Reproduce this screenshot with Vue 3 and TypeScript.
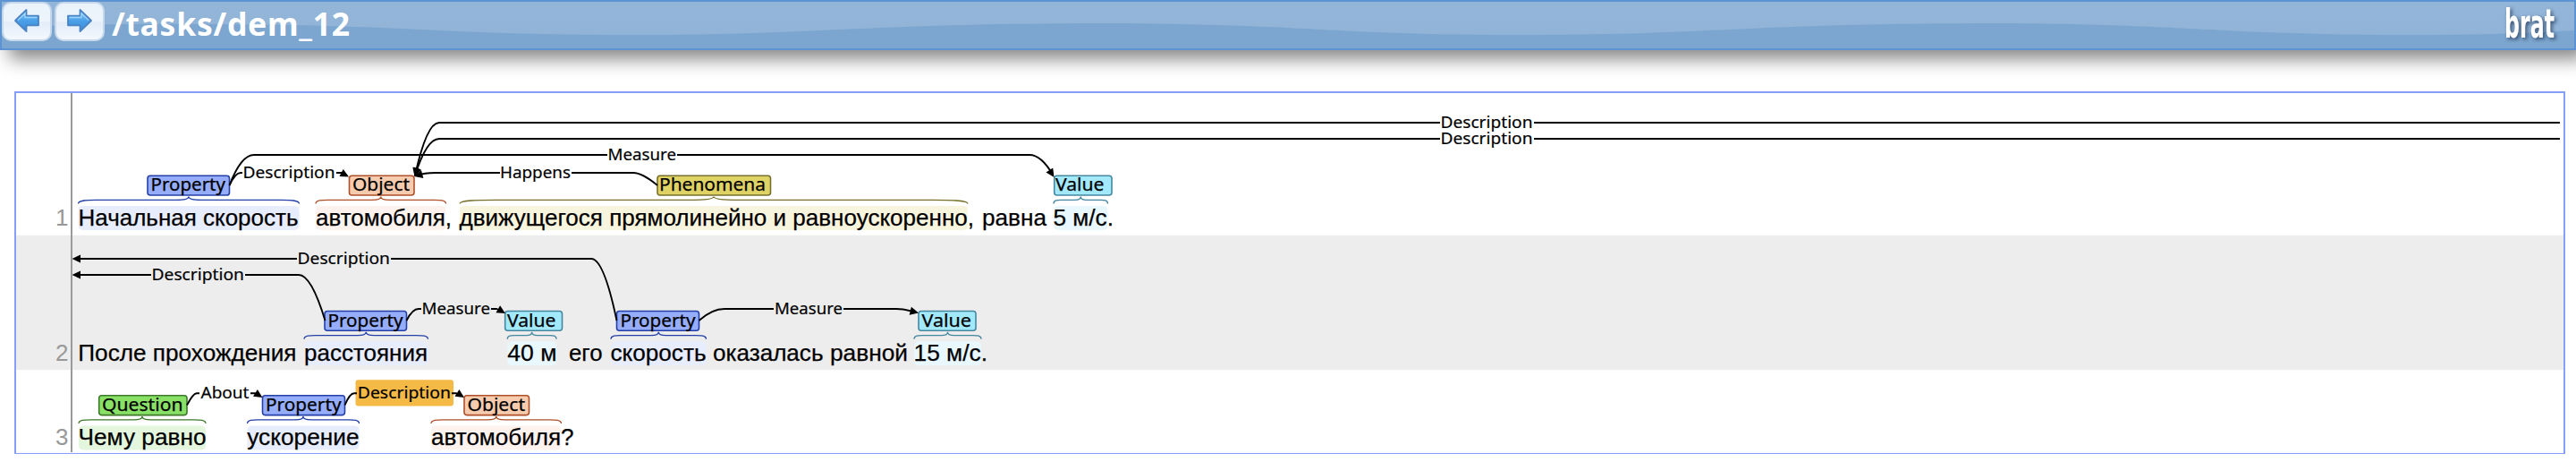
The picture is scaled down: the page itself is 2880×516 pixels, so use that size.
<script setup lang="ts">
type Kind = 'property' | 'object' | 'phenomena' | 'value' | 'question'

interface Word { text: string; x: number; end: number }
interface Span { kind: Kind; label: string; box: [number, number]; label_x: [number, number]; mark: [number, number] }
interface Arc { path: string; label: string; x: number; end: number; y: number; head: string; lit?: boolean }
interface Sentence { n: number; base: number; words: Word[]; spans: Span[]; arcs: Arc[] }

/** Arrow head with its tip at (x, y), pointing in the direction given in degrees. */
const head = (x: number, y: number, angle: number) => `translate(${x} ${y}) rotate(${angle})`

/** Brace over the marked words, with its point under the middle of the label box. */
const curly = (s: Span, base: number) => {
  const [a, b] = s.mark
  const mid = (a + b) / 2
  const half = (b - a) / 2
  const top = base - 32.3
  const centre = base - 28.4
  const bottom = base - 24.2
  const edge = 4 + half * 0.13
  const tip = 4 + half * 0.08
  return `M${a},${bottom} C${a},${centre} ${a + edge * 0.5},${centre} ${a + edge},${centre} H${mid - tip}`
    + ` Q${mid},${centre} ${mid},${top} Q${mid},${centre} ${mid + tip},${centre}`
    + ` H${b - edge} C${b - edge * 0.5},${centre} ${b},${centre} ${b},${bottom}`
}

const sentences: Sentence[] = [
  {
    n: 1,
    base: 251.7,
    words: [
      { text: 'Начальная скорость', x: 87.5, end: 333.5 },
      { text: 'автомобиля,', x: 353, end: 505 },
      { text: 'движущегося прямолинейно и равноускоренно,', x: 513.5, end: 1089 },
      { text: 'равна', x: 1098, end: 1170 },
      { text: '5 м/с.', x: 1177.5, end: 1245 },
    ],
    spans: [
      { kind: 'property', label: 'Property', box: [165, 256.5], label_x: [168.5, 252], mark: [87.5, 334.5] },
      { kind: 'object', label: 'Object', box: [390.5, 463], label_x: [394, 458], mark: [353, 498.5] },
      { kind: 'phenomena', label: 'Phenomena', box: [735, 861.5], label_x: [737, 856], mark: [514, 1082] },
      { kind: 'value', label: 'Value', box: [1178.7, 1243], label_x: [1180, 1234.5], mark: [1178, 1238.5] },
    ],
    arcs: [
      { path: 'M464,196 Q477,137 491,137 H1610 M1715,137 H2862', label: 'Description', x: 1610.5, end: 1713.5, y: 137, head: head(463.5, 197, 104) },
      { path: 'M464,196 Q477,155 491,155 H1610 M1715,155 H2862', label: 'Description', x: 1610.5, end: 1713.5, y: 155, head: head(463.5, 197, 110) },
      { path: 'M256.5,207 Q269.5,173 284,173 H679 M757,173 H1151 Q1164,173 1177,195', label: 'Measure', x: 679.5, end: 756, y: 173, head: head(1178.5, 198, 57) },
      { path: 'M256.5,207 Q263,193 269,193 H271 M376,193 H382 L388,196', label: 'Description', x: 271.5, end: 374.5, y: 193, head: head(390, 197.5, 28) },
      { path: 'M735,207 Q718,193 708,193 H639 M559,193 H487 Q474,193 466,196', label: 'Happens', x: 559, end: 638, y: 193, head: head(463, 197, 165) },
    ],
  },
  {
    n: 2,
    base: 403,
    words: [
      { text: 'После прохождения', x: 87.3, end: 331.5 },
      { text: 'расстояния', x: 340, end: 478 },
      { text: '40 м', x: 567.3, end: 622.5 },
      { text: 'его', x: 636, end: 673.5 },
      { text: 'скорость', x: 682.5, end: 789.5 },
      { text: 'оказалась', x: 797, end: 920.5 },
      { text: 'равной', x: 928, end: 1015 },
      { text: '15 м/с.', x: 1021.5, end: 1104 },
    ],
    spans: [
      { kind: 'property', label: 'Property', box: [363, 454.5], label_x: [366.5, 450.5], mark: [340, 478.5] },
      { kind: 'value', label: 'Value', box: [564.7, 628.5], label_x: [567, 621.5], mark: [567.3, 622] },
      { kind: 'property', label: 'Property', box: [689.5, 781.5], label_x: [693.5, 777.5], mark: [683, 789.5] },
      { kind: 'value', label: 'Value', box: [1027, 1091], label_x: [1030.5, 1086], mark: [1022, 1097] },
    ],
    arcs: [
      { path: 'M689.5,358 Q675,289 661,289 H437 M332,289 H84', label: 'Description', x: 332.5, end: 436, y: 289, head: head(80.5, 289, 180) },
      { path: 'M363.5,358 Q348,307 334,307 H274 M169,307 H84', label: 'Description', x: 169.5, end: 273, y: 307, head: head(80.5, 307, 180) },
      { path: 'M454.5,358 Q461,345 468,345 H471 M549,345 H555 L562,348', label: 'Measure', x: 471.5, end: 548, y: 345, head: head(565, 350, 30) },
      { path: 'M781.5,358 Q796,345 810,345 H865 M943,345 H1002 Q1012,345 1024,349', label: 'Measure', x: 866, end: 942, y: 345, head: head(1027, 349.5, 14) },
    ],
  },
  {
    n: 3,
    base: 497.3,
    words: [
      { text: 'Чему равно', x: 87.5, end: 230.5 },
      { text: 'ускорение', x: 276.3, end: 401.5 },
      { text: 'автомобиля?', x: 482, end: 641.5 },
    ],
    spans: [
      { kind: 'question', label: 'Question', box: [110.7, 209], label_x: [114, 204.5], mark: [88, 230] },
      { kind: 'property', label: 'Property', box: [293.5, 385.5], label_x: [297, 381.5], mark: [276.5, 401.5] },
      { kind: 'object', label: 'Object', box: [519, 591.5], label_x: [522.5, 587], mark: [482, 627.5] },
    ],
    arcs: [
      { path: 'M209,452.5 Q216,439.3 220,439.3 H223 M280,439.3 H285 L290,442', label: 'About', x: 224.5, end: 278.5, y: 439.3, head: head(293.5, 444, 32) },
      { path: 'M385.5,452.5 Q391,439.3 396,439.3 H399 M505,439.3 H510 L516,442', label: 'Description', x: 399.8, end: 504, y: 439.3, head: head(519, 444, 32), lit: true },
    ],
  },
]
</script>

<template>
  <div class="page">
    <header class="bar">
      <svg class="wave" viewBox="0 0 2876 52" preserveAspectRatio="none">
        <path d="M0,29 C80,25 160,24 250,25 C450,26 500,37 705,37 C920,37 960,24 1247,24 C1460,25 1490,37 1697,37 C1910,37 1950,24 2239,24 C2450,25 2480,37 2695,37 C2770,37 2830,35 2876,32 V52 H0 Z" />
      </svg>
      <nav class="nav">
        <button v-for="dir in ['prev', 'next']" :key="dir" class="step" :class="dir" type="button">
          <svg viewBox="0 0 30 28" width="30" height="28">
            <defs>
              <linearGradient :id="'fill-' + dir" x1="0" y1="0" x2="0" y2="1">
                <stop offset="0" stop-color="#8fd0fb" />
                <stop offset=".5" stop-color="#4aa0e8" />
                <stop offset="1" stop-color="#3c8bd9" />
              </linearGradient>
            </defs>
            <path d="M2,14 L14.5,2 V8.7 H28 V19.3 H14.5 V26 Z" :fill="`url(#fill-${dir})`" stroke="#4c83c3" stroke-width="1.8" stroke-linejoin="round" />
            <path d="M5,13.5 L13,6 V10.5 H26.3" fill="none" stroke="#a8dcff" stroke-width="1.3" opacity=".8" />
          </svg>
        </button>
      </nav>
      <svg class="heading" width="280" height="52">
        <text x="2" y="37.7" textLength="266" lengthAdjust="spacing">/tasks/dem_12</text>
      </svg>
      <svg class="logo" width="70" height="52">
        <text x="3" y="39.5" textLength="56" lengthAdjust="spacingAndGlyphs">brat</text>
      </svg>
    </header>

    <main class="frame">
      <svg class="canvas" viewBox="18 104 2848 402" width="2848" height="402">
        <rect class="stripe" x="18" y="262.7" width="2848" height="150.5" />
        <g v-for="s in sentences" :key="s.n">
          <text class="number" x="76.5" :y="s.base" text-anchor="end">{{ s.n }}</text>
          <rect
            v-for="(p, i) in s.spans" :key="'m' + i" class="mark" :class="p.kind"
            :x="p.mark[0]" :y="s.base - 21.8" :width="p.mark[1] - p.mark[0]" height="27" rx="5"
          />
          <text
            v-for="w in s.words" :key="w.text" class="word" :x="w.x" :y="s.base"
            :textLength="w.end - w.x" lengthAdjust="spacingAndGlyphs"
          >{{ w.text }}</text>
          <g v-for="(p, i) in s.spans" :key="'b' + i" class="span" :class="p.kind">
            <path class="curly" :d="curly(p, s.base)" />
            <rect class="box" :x="p.box[0]" :y="s.base - 55.5" :width="p.box[1] - p.box[0]" height="21.8" rx="3" />
            <text
              :x="p.label_x[0]" :y="s.base - 38.4"
              :textLength="p.label_x[1] - p.label_x[0]" lengthAdjust="spacingAndGlyphs"
            >{{ p.label }}</text>
          </g>
          <g v-for="(a, i) in s.arcs" :key="'a' + i" class="arc">
            <rect v-if="a.lit" class="lit" x="397.5" y="424.3" width="109.5" height="29.2" rx="3" />
            <path class="line" :d="a.path" />
            <path d="M0,0 L-9.5,-4.6 V4.6 Z" :transform="a.head" />
            <text :x="a.x" :y="a.y + 5.8" :textLength="a.end - a.x" lengthAdjust="spacingAndGlyphs">{{ a.label }}</text>
          </g>
        </g>
        <path class="margin" d="M80,104 V505" />
      </svg>
    </main>
  </div>
</template>

<style>
body {
  margin: 0;
  background: #fff;
}
</style>

<style scoped>
.page {
  width: 2880px;
  height: 516px;
  overflow: hidden;
}
.bar {
  position: relative;
  box-sizing: border-box;
  display: flex;
  width: 2880px;
  height: 56px;
  border: 2px solid #5b93d3;
  background: linear-gradient(#93b5d8, #8fb3d7);
  box-shadow: 10px 10px 20px #888;
}
.wave {
  position: absolute;
  inset: 0;
  width: 100%;
  height: 100%;
}
.wave path {
  fill: #7ca6cf;
}
.nav {
  position: relative;
  display: flex;
  gap: 3px;
}
.step {
  display: flex;
  align-items: center;
  justify-content: center;
  box-sizing: border-box;
  width: 56px;
  height: 44px;
  padding: 0 0 2px;
  border: 2px solid #c6d8eb;
  border-radius: 10px;
  background: linear-gradient(#eaf3fc 0%, #edf4fb 50%, #e2edf9 52%, #f3f8fe 100%);
}
.next svg {
  transform: scaleX(-1);
}
.heading {
  position: relative;
  margin-left: 6px;
  overflow: visible;
}
.heading text {
  font: bold 35.5px "Noto Sans", "Open Sans", sans-serif;
  fill: #fff;
}
.logo {
  position: relative;
  margin-left: auto;
  margin-right: 11px;
  overflow: visible;
  filter: drop-shadow(2px 2px 2px rgba(30, 50, 80, .75));
}
.logo text {
  font: bold 45px "DejaVu Sans Condensed", "DejaVu Sans", sans-serif;
  fill: #fff;
}
.frame {
  box-sizing: border-box;
  width: 2852px;
  height: 405px;
  margin: 46px 0 0 16px;
  border: 2px solid #859ffa;
  border-bottom-width: 1px;
}
.canvas {
  display: block;
}
.stripe {
  fill: #ededed;
}
.margin {
  stroke: #999;
  stroke-width: 2;
}
.word,
.number {
  font: 26px "Liberation Sans", Arial, sans-serif;
}
.word {
  stroke: #000;
  stroke-width: .25;
}
.number {
  fill: #999;
}
.span text {
  font: 19.6px "Noto Sans", "Open Sans", sans-serif;
  stroke: #000;
  stroke-width: .25;
}
.box {
  stroke-width: 1.6;
}
.curly {
  fill: none;
  stroke-width: 1.3;
}
.arc text {
  font: 18px "Noto Sans", "Open Sans", sans-serif;
  stroke: #000;
  stroke-width: .2;
}
.line {
  fill: none;
  stroke: #000;
  stroke-width: 1.9;
}
.lit {
  fill: #f5b945;
}
.property .box { fill: #95adfa; stroke: #2440a8; }
.property .curly { stroke: #2440a8; }
.mark.property { fill: #e8edfe; }
.object .box { fill: #f7ccae; stroke: #ae5029; }
.object .curly { stroke: #ae5029; }
.mark.object { fill: #fdf2ed; }
.phenomena .box { fill: #e0d366; stroke: #77702c; }
.phenomena .curly { stroke: #77702c; }
.mark.phenomena { fill: #f8f5df; }
.value .box { fill: #a3e9fc; stroke: #4687a0; }
.value .curly { stroke: #4687a0; }
.mark.value { fill: #e9f7fe; }
.question .box { fill: #89e067; stroke: #3c7a2a; }
.question .curly { stroke: #3c7a2a; }
.mark.question { fill: #e4f6de; }
</style>
